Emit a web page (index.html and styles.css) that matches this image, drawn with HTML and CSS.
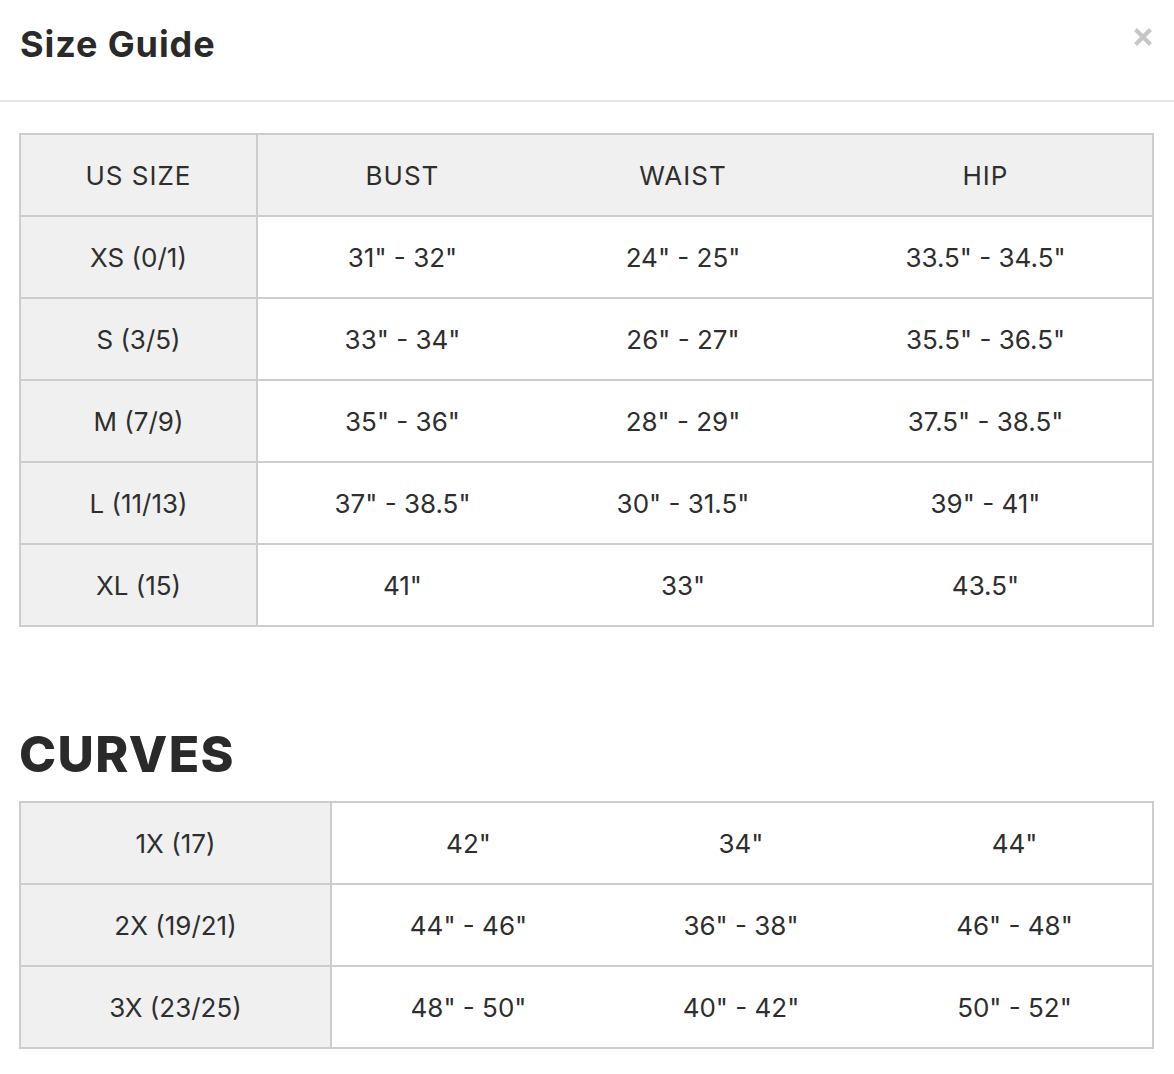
FILE: index.html
```html
<!DOCTYPE html>
<html>
<head>
<meta charset="utf-8">
<link rel="stylesheet" href="styles.css">
</head>
<body>
<div class="modal">
  <header class="head">
    <h1 class="title">Size Guide</h1>
    <button class="close" aria-label="Close">
      <svg width="18" height="18" viewBox="0 0 18 18"><path d="M3 3 L15 15 M15 3 L3 15" stroke="#c6c6c6" stroke-width="4.2" stroke-linecap="square"/></svg>
    </button>
  </header>
  <div class="content">
    <table class="sizes t1">
      <colgroup><col class="c1a"><col class="c2a"><col class="c3a"><col class="c4a"></colgroup>
      <tr class="hrow"><td class="first">US SIZE</td><td>BUST</td><td>WAIST</td><td>HIP</td></tr>
      <tr><td class="first">XS (0/1)</td><td>31" - 32"</td><td>24" - 25"</td><td>33.5" - 34.5"</td></tr>
      <tr><td class="first">S (3/5)</td><td>33" - 34"</td><td>26" - 27"</td><td>35.5" - 36.5"</td></tr>
      <tr><td class="first">M (7/9)</td><td>35" - 36"</td><td>28" - 29"</td><td>37.5" - 38.5"</td></tr>
      <tr><td class="first">L (11/13)</td><td>37" - 38.5"</td><td>30" - 31.5"</td><td>39" - 41"</td></tr>
      <tr><td class="first">XL (15)</td><td>41"</td><td>33"</td><td>43.5"</td></tr>
    </table>
    <h2 class="section">CURVES</h2>
    <table class="sizes t2">
      <colgroup><col class="c1b"><col class="c2b"><col class="c3b"><col class="c4b"></colgroup>
      <tr><td class="first">1X (17)</td><td>42"</td><td>34"</td><td>44"</td></tr>
      <tr><td class="first">2X (19/21)</td><td>44" - 46"</td><td>36" - 38"</td><td>46" - 48"</td></tr>
      <tr><td class="first">3X (23/25)</td><td>48" - 50"</td><td>40" - 42"</td><td>50" - 52"</td></tr>
    </table>
  </div>
</div>
</body>
</html>
```
FILE: styles.css
```css
html, body { margin: 0; padding: 0; background: #fff; }
body { font-family: Inter, "Open Sans", sans-serif; color: #2c2c2c; }
.head {
  height: 100px;
  border-bottom: 2px solid #e6e6e6;
  display: flex;
  align-items: flex-start;
  justify-content: space-between;
  padding: 0 22px 0 20px;
}
.title {
  margin: 0;
  padding-top: 22px;
  font-size: 36px;
  line-height: 44px;
  font-weight: 700;
  letter-spacing: 0.9px;
  color: #2a2a2a;
}
.close {
  margin-top: 28px;
  padding: 0;
  border: 0;
  background: none;
  width: 18px;
  height: 18px;
  display: block;
}
.close svg { display: block; }
.content { padding: 31px 20px 0 19px; }
.sizes {
  width: 1135px;
  border-collapse: collapse;
  table-layout: fixed;
  border: 2px solid #cdcdcd;
  font-size: 26px;
  color: #2e2e2e;
}
.sizes td {
  height: 80px;
  padding: 0;
  text-align: center;
  vertical-align: middle;
  border-top: 2px solid #cdcdcd;
}
.sizes td.first { background: #f0f0f0; border-right: 2px solid #cdcdcd; }
.hrow td { background: #f0f0f0; letter-spacing: 1px; }
.c1a { width: 237px; } .c2a { width: 290px; } .c3a { width: 272px; } .c4a { width: 334px; }
.c1b { width: 311px; } .c2b { width: 274px; } .c3b { width: 272px; } .c4b { width: 276px; }
.section {
  margin: 99px 0 19px;
  font-size: 50px;
  line-height: 56px;
  font-weight: 800;
  color: #2a2a2a;
  letter-spacing: 1.4px;
}
```
